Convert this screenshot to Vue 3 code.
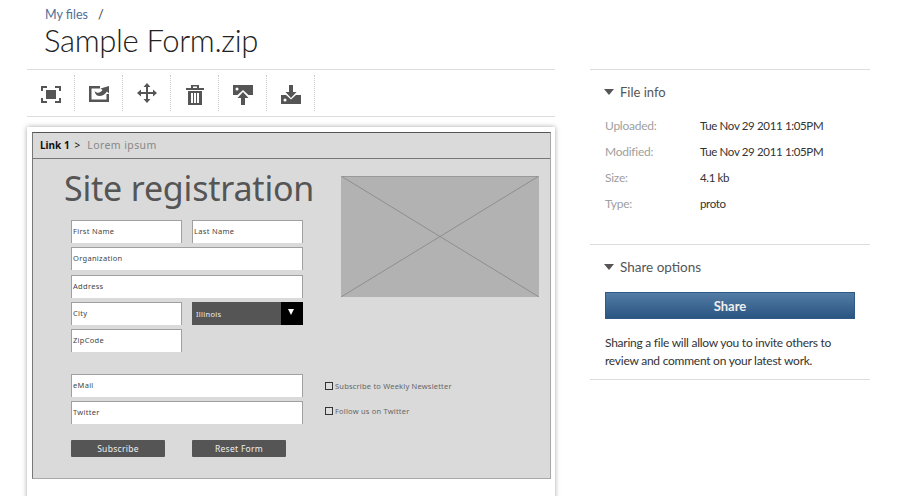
<script setup>
const toolbar = ['focus', 'share', 'move', 'trash', 'upload', 'download']

const fileInfo = [
  { label: 'Uploaded:', value: 'Tue Nov 29 2011 1:05PM' },
  { label: 'Modified:', value: 'Tue Nov 29 2011 1:05PM' },
  { label: 'Size:', value: '4.1 kb' },
  { label: 'Type:', value: 'proto' }
]
</script>

<template>
  <div class="page">
    <main class="main">
      <header class="head">
        <div class="crumbs"><a class="crumb-link">My files</a><span class="crumb-sep">/</span></div>
        <h1 class="title">Sample Form.zip</h1>
      </header>

      <div class="toolbar">
        <button v-for="tool in toolbar" :key="tool" class="tool" type="button" :aria-label="tool">
          <svg width="24" height="24" viewBox="0 0 24 24" fill="#555">
            <template v-if="tool === 'focus'">
              <path d="M2 5h6v2H4v3H2zM16 5h6v5h-2V7h-4zM2 17h2v3h4v2H2zM20 17h2v5h-6v-2h4z" />
              <rect x="7" y="9" width="10" height="9" />
            </template>
            <template v-else-if="tool === 'share'">
              <path d="M2 5h11v2.500H4.500V18.500H19.500V13H22V21H2z" />
              <path d="M7.500 10C10 12.500 13 12.500 15.500 9L13.500 7.500L22 5V12.500L20 10.500C17 15 12 16 9.500 14C8.500 13 8 11.500 7.500 10z" />
            </template>
            <path
              v-else-if="tool === 'move'"
              d="M12 2l3.500 4H13v5h5V8.500L22 12l-4 3.500V13h-5v5h2.500L12 22l-3.500-4H11v-5H6v2.500L2 12l4-3.500V11h5V6H8.500z"
            />
            <template v-else-if="tool === 'trash'">
              <path d="M8 4h8v3h5v2H3V7h5zM10 5.500V7h4V5.500z" fill-rule="evenodd" />
              <path d="M5 10h14v15H5zM8 12v10h2V12zM11 12v10h2V12zM14 12v10h2V12z" fill-rule="evenodd" />
            </template>
            <template v-else-if="tool === 'upload'">
              <path d="M2 4h20v10h-4.500L12 9 6.500 14H2z" />
              <circle cx="6" cy="8" r="1.500" fill="#fff" />
              <path d="M12 11l5.500 6H14v7h-4v-7H6.500z" />
            </template>
            <template v-else>
              <path d="M2 14h5l5 4.500 5-4.500h5v9H2z" />
              <circle cx="6" cy="19" r="1.500" fill="#fff" />
              <path d="M10 4h4v7h3.500L12 17l-5.500-6H10z" />
            </template>
          </svg>
        </button>
      </div>

      <section class="card">
        <div class="wire">
          <div class="wire-nav"><b>Link 1</b><span class="nav-arrow">&gt;</span><span class="nav-muted">Lorem ipsum</span></div>
          <div class="wire-body">
            <div class="wire-form">
              <h2 class="wire-title">Site registration</h2>
              <div class="field-row">
                <div class="field">First Name</div>
                <div class="field">Last Name</div>
              </div>
              <div class="field">Organization</div>
              <div class="field field-gap">Address</div>
              <div class="field-row">
                <div class="field">City</div>
                <div class="select"><span>Illinois</span><i class="select-btn"></i></div>
              </div>
              <div class="field-row">
                <div class="field">ZipCode</div>
              </div>
              <div class="field field-email">eMail</div>
              <div class="field">Twitter</div>
              <div class="wire-actions">
                <div class="wire-btn">Subscribe</div>
                <div class="wire-btn">Reset Form</div>
              </div>
            </div>
            <div class="wire-side">
              <svg class="placeholder" width="198" height="121" viewBox="0 0 198 121">
                <rect width="198" height="121" fill="#b2b2b2" />
                <path d="M0 0L198 121M198 0L0 121" stroke="#8e8e8e" stroke-width="1" fill="none" />
                <path d="M0 .5H198" stroke="#999" />
              </svg>
              <label class="check check-first"><i class="box"></i>Subscribe to Weekly Newsletter</label>
              <label class="check"><i class="box"></i>Follow us on Twitter</label>
            </div>
          </div>
        </div>
      </section>
    </main>

    <aside class="side">
      <section class="panel panel-info">
        <h3 class="panel-title title-info"><i class="caret"></i>File info</h3>
        <dl class="info">
          <template v-for="row in fileInfo" :key="row.label">
            <dt>{{ row.label }}</dt>
            <dd>{{ row.value }}</dd>
          </template>
        </dl>
      </section>
      <section class="panel panel-share">
        <h3 class="panel-title"><i class="caret"></i>Share options</h3>
        <button class="share" type="button">Share</button>
        <p class="share-note">Sharing a file will allow you to invite others to review and comment on your latest work.</p>
      </section>
    </aside>
  </div>
</template>

<style>
html,
body {
  margin: 0;
  background: #fff;
  overflow: hidden;
}
</style>

<style scoped>
.page {
  display: flex;
  gap: 35px;
  height: 496px;
  padding-left: 27px;
  overflow: hidden;
  box-sizing: border-box;
  font-family: Lato, "Liberation Sans", sans-serif;
  color: #333;
}

.main {
  width: 528px;
  flex: none;
}

.head {
  height: 69px;
  padding: 7px 0 0 17px;
  box-sizing: border-box;
}

.crumbs {
  padding-left: 1px;
  font-size: 12.500px;
  line-height: 16px;
}

.crumb-link {
  color: #4d6f98;
}

.crumb-sep {
  margin-left: 10px;
  color: #333;
}

.title {
  margin: -2px 0 0;
  font-size: 31px;
  font-weight: 300;
  letter-spacing: -0.35px;
  line-height: 38px;
  color: #222;
}

.toolbar {
  display: flex;
  height: 48px;
  padding: 5px 0;
  box-sizing: border-box;
  border-top: 1px solid #ddd;
  border-bottom: 1px solid #ddd;
}

.tool {
  display: flex;
  align-items: center;
  justify-content: center;
  width: 48px;
  padding: 0;
  border: 0;
  border-right: 1px dotted #ccc;
  background: none;
}

.card {
  height: 400px;
  margin-top: 10px;
  padding: 5px 4px 0 5px;
  box-sizing: border-box;
  background: #fff;
  box-shadow: 0 0 5px rgba(0, 0, 0, 0.35);
}

.wire {
  height: 347px;
  box-sizing: border-box;
  border: 1px solid #a8a8a8;
  border-top-color: #555;
  border-left-color: #777;
  background: #dadada;
  font-family: "Noto Sans", "Open Sans", sans-serif;
  color: #555;
}

.wire-nav {
  display: flex;
  align-items: center;
  gap: 5px;
  height: 26px;
  padding: 0 0 1px 7px;
  box-sizing: border-box;
  border-bottom: 1px solid #777;
  font-size: 10px;
  color: #111;
}

.wire-nav b {
  font-weight: 700;
}

.nav-muted {
  margin-left: 2px;
  color: #888;
  font-size: 10.500px;
  letter-spacing: 0.4px;
}

.wire-body {
  display: flex;
  gap: 22px;
  padding-left: 38px;
}

.wire-form {
  display: flex;
  flex-direction: column;
  width: 232px;
  flex: none;
}

.wire-title {
  margin: 5px 0 7px -7px;
  font-size: 34px;
  font-weight: 400;
  letter-spacing: -0.2px;
  line-height: 49px;
  white-space: nowrap;
  color: #555;
}

.field-row {
  display: flex;
  gap: 10px;
  margin-bottom: 4px;
}

.field {
  display: flex;
  align-items: center;
  flex: none;
  height: 23px;
  padding: 0 0 2px 1px;
  box-sizing: border-box;
  border: 1px solid #a0a0a0;
  border-bottom: 0;
  background: #fff;
  font-size: 7.500px;
  letter-spacing: 0.3px;
  color: #444;
}

.field-row .field {
  width: 111px;
}

.field-row .select {
  width: 111px;
}

.field-gap {
  margin: 5px 0 4px;
}

.field-email {
  margin: 18px 0 4px;
}

.select {
  display: flex;
  align-items: center;
  justify-content: space-between;
  height: 23px;
  padding-left: 4px;
  box-sizing: border-box;
  background: #555;
  font-size: 7.500px;
  letter-spacing: 0.3px;
  color: #eee;
}

.select-btn {
  position: relative;
  display: block;
  width: 22px;
  height: 23px;
  background: #000;
}

.select-btn::after {
  content: "";
  position: absolute;
  left: 7px;
  top: 7px;
  border-left: 3px solid transparent;
  border-right: 3px solid transparent;
  border-top: 6px solid #fff;
}

.wire-actions {
  display: flex;
  gap: 27px;
  margin-top: 16px;
}

.wire-btn {
  width: 94px;
  height: 17px;
  border-radius: 1px;
  background: #555;
  font-size: 8.500px;
  line-height: 17px;
  letter-spacing: 0.3px;
  text-align: center;
  color: #eee;
}

.wire-side {
  padding-top: 17px;
}

.placeholder {
  display: block;
  margin-left: 16px;
}

.check {
  display: flex;
  align-items: center;
  gap: 2px;
  height: 23px;
  margin-top: 2px;
  font-size: 7.500px;
  letter-spacing: 0.2px;
  color: #666;
}

.check-first {
  margin-top: 77px;
}

.box {
  display: block;
  width: 6px;
  height: 6px;
  border: 1px solid #333;
  background: #ddd;
}

.side {
  width: 280px;
  flex: none;
  margin-top: 69px;
  border-top: 1px solid #ddd;
}

.panel {
  padding: 0 15px;
  border-bottom: 1px solid #ddd;
  box-sizing: border-box;
}

.panel-info {
  height: 175px;
}

.panel-share {
  height: 135px;
}

.panel-title {
  display: flex;
  align-items: center;
  margin: 0;
  padding: 13px 0 1px;
  font-size: 13.500px;
  font-weight: 400;
  line-height: 18px;
  color: #555;
}

.title-info {
  font-size: 13px;
}

.caret {
  display: block;
  width: 0;
  margin: 0 6px 0 -1px;
  border-left: 5px solid transparent;
  border-right: 5px solid transparent;
  border-top: 6px solid #555;
}

.info {
  display: grid;
  grid-template-columns: 95px 1fr;
  grid-auto-rows: 26px;
  margin: 11px 0 0;
  font-size: 12px;
  line-height: 26px;
}

.info dt {
  color: #a0a0a0;
  letter-spacing: -0.25px;
}

.info dd {
  margin: 0;
  font-size: 11.500px;
  letter-spacing: -0.35px;
  color: #333;
}

.share {
  display: block;
  width: 250px;
  height: 27px;
  margin-top: 15px;
  padding: 0;
  border: 1px solid #2d5a87;
  background: linear-gradient(#527ca4, #2a5581);
  font-family: inherit;
  font-size: 13px;
  font-weight: 700;
  color: #eee;
}

.share-note {
  margin: 15px 0 0;
  font-size: 12px;
  letter-spacing: -0.25px;
  line-height: 18px;
  color: #333;
}
</style>
